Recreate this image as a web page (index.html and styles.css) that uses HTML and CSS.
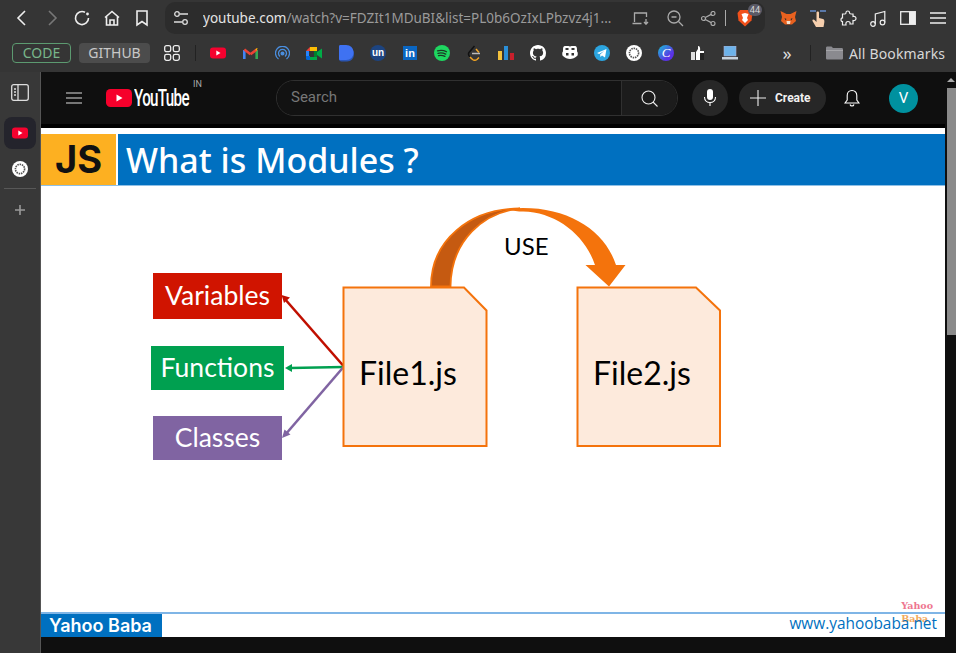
FILE: index.html
```html
<!DOCTYPE html>
<html lang="en">
<head>
    <meta charset="UTF-8">
    <meta name="viewport" content="width=device-width, initial-scale=1.0">
    <title>What is Modules - YouTube</title>
    <link rel="stylesheet" href="styles.css">
</head>
<body>
    <!-- browser toolbar -->
    <div class="toolbar">
        <span class="tool"><svg width="18" height="18" viewBox="0 0 18 18" class="line"><path d="M12 2 5 9l7 7"/></svg></span>
        <span class="tool dim"><svg width="18" height="18" viewBox="0 0 18 18" class="line"><path d="M6 2l7 7-7 7"/></svg></span>
        <span class="tool"><svg width="18" height="18" viewBox="0 0 18 18" class="line"><path d="M15.5 9A6.5 6.5 0 1 1 12 3.3"/><circle cx="14.5" cy="5" r="1.4" fill="#eee" stroke="none"/></svg></span>
        <span class="tool"><svg width="18" height="18" viewBox="0 0 18 18" class="line"><path d="M2 8.500 9 2.500l7 6M3.500 7.500V16h11V7.500M7 16v-5h4v5"/></svg></span>
        <span class="tool"><svg width="18" height="18" viewBox="0 0 18 18" class="line"><path d="M4 2h10v14l-5-3.500L4 16z"/></svg></span>

        <div class="omnibox">
            <svg class="tune" width="16" height="16" viewBox="0 0 16 16" fill="none" stroke="#ddd" stroke-width="1.300"><circle cx="4" cy="4" r="2.300"/><path d="M7 4h8M1 12h8"/><circle cx="12" cy="12" r="2.300"/></svg>
            <div class="url"><span class="host">youtube.com</span>/watch?v=FDZIt1MDuBI&amp;list=PL0b6OzIxLPbzvz4j1...</div>
            <span class="omni-btn"><svg width="18" height="13" viewBox="0 0 18 13" fill="none" stroke="#aaa" stroke-width="1.300"><path d="M2.500 10V1h12v4M.5 11.500h9"/><path d="M14 7v5M12 10l2 2.200 2-2.200"/></svg></span>
            <span class="omni-btn gap-zoom"><svg width="17" height="17" viewBox="0 0 17 17" fill="none" stroke="#aaa" stroke-width="1.300"><circle cx="7" cy="7" r="6"/><path d="M4.500 7h5M11.500 11.500 16 16"/></svg></span>
            <span class="omni-btn gap-share"><svg width="15" height="15" viewBox="0 0 15 15" fill="none" stroke="#aaa" stroke-width="1.200"><circle cx="2.500" cy="7.500" r="2"/><circle cx="12" cy="2.500" r="2"/><circle cx="12" cy="12.500" r="2"/><path d="M4.300 6.500 10.200 3.400M4.300 8.500l5.900 3.100"/></svg></span>
            <span class="omni-sep"></span>
            <span class="brave">
                <svg width="16" height="18" viewBox="0 0 16 18"><path d="M3 1h10l2.500 3-1 7.500L8 17.500 1.500 11.500.500 4z" fill="#f1511b"/><path d="M4.500 5 8 4l3.500 1L10 9l1 2-3 3-3-3 1-2z" fill="#fff"/></svg>
                <span class="badge">44</span>
            </span>
        </div>

        <div class="extensions">
            <span class="tool"><svg width="19" height="16" viewBox="0 0 18 16"><path d="M1 1l6 3h4l6-3-1.500 6 1 4-4 3.500H5.500L1.500 11l1-4z" fill="#e8611f"/><path d="M5 8l2 1-1 1.500zM13 8l-2 1 1 1.500z" fill="#2b2b2b"/><path d="M7 11h4l-.5 3h-3z" fill="#f3e2cf"/></svg></span>
            <span class="tool"><svg width="18" height="20" viewBox="0 0 18 20"><path d="M1 3h6M11 3h6" stroke="#5a78a8" stroke-width="2"/><path d="M7.500 4.500c0-1.500 2.500-1.500 2.500 0V10l4 1c1.500.5 1.500 2 1.300 3.500L14.500 19H7L3.500 13c-.5-1.500 1-2 2-1l2 2z" fill="#f6cfae"/></svg></span>
            <span class="tool"><svg width="17" height="17" viewBox="0 0 17 17" class="line thin"><path d="M6 2.500C6 .5 9.500.5 9.500 2.500c0 1 .5 1.500 1.500 1.500h2v2.500c1.800-.5 3 .5 3 2s-1.500 2.500-3 2V14h-3c.5-1.500-.5-2.500-2-2.500S5.500 12.500 6 15H2.500v-3.500C.5 12 .5 7.500 2.500 8V4H5c.8 0 1-.7 1-1.500z"/></svg></span>
            <span class="tool"><svg width="16" height="17" viewBox="0 0 16 17" class="line thin"><circle cx="3" cy="14" r="2.300"/><circle cx="12.500" cy="12.500" r="2.300"/><path d="M5.300 14V4L14.800 1.500v11"/></svg></span>
            <span class="tool"><svg width="16" height="14" viewBox="0 0 16 14"><rect x=".7" y=".7" width="14.600" height="12.600" fill="none" stroke="#eee" stroke-width="1.300"/><rect x="9" y="1" width="6" height="12" fill="#eee"/></svg></span>
            <span class="tool"><svg width="16" height="14" viewBox="0 0 16 14" class="line"><path d="M0 2h16M0 7h16M0 12h16"/></svg></span>
        </div>
    </div>

    <!-- bookmarks bar -->
    <div class="bookmarks">
        <span class="chip chip-code">CODE</span>
        <span class="chip chip-github">GITHUB</span>
        <svg class="apps" width="16" height="16" viewBox="0 0 16 16" fill="none" stroke="#eee" stroke-width="1.300"><rect x=".7" y=".7" width="6" height="6" rx="1.800"/><rect x="9.300" y=".7" width="6" height="6" rx="1.800"/><rect x=".7" y="9.300" width="6" height="6" rx="1.800"/><rect x="9.300" y="9.300" width="6" height="6" rx="1.800"/></svg>
        <span class="bar-sep first"></span>
        <div class="marks">
            <span class="mark"><svg width="16" height="12" viewBox="0 0 16 12"><rect width="16" height="11" y=".5" rx="3" fill="#f5022f"/><path d="M6.300 3.500v5l4.200-2.500z" fill="#fff"/></svg></span>
            <span class="mark"><svg width="15" height="12" viewBox="0 0 15 12" fill="none" stroke-width="2.600"><path d="M1.300 12V3" stroke="#4285f4"/><path d="M13.700 12V3" stroke="#34a853"/><path d="M1.300 2.500l6.200 4.700" stroke="#ea4335"/><path d="M7.500 7.200l6.200-4.700" stroke="#ea4335"/><path d="M13 2l1 .6" stroke="#fbbc04"/></svg></span>
            <span class="mark"><svg width="15" height="15" viewBox="0 0 15 15" fill="none" stroke="#4a8fe0" stroke-width="1.300"><path d="M3.500 13a7 7 0 1 1 8 0"/><path d="M5 10.500a4 4 0 1 1 5 0"/><circle cx="7.500" cy="7.500" r="1.400" fill="#4a8fe0"/></svg></span>
            <span class="mark"><svg width="16" height="13" viewBox="0 0 16 13"><path d="M0 4 4 0v4z" fill="#ea4335"/><path d="M4 0h7v4H4z" fill="#fbbc04"/><path d="M0 4h3v5H0z" fill="#2684fc"/><path d="M0 9h4v4H1.500A1.500 1.500 0 0 1 0 11.500z" fill="#0066da"/><path d="M4 10h7v3H4z" fill="#00ac47"/><path d="M8 4h3v6H8z" fill="#00832d"/><path d="M11 5l5-3.500v10L11 8z" fill="#00ac47"/></svg></span>
            <span class="mark"><svg width="15" height="17" viewBox="0 0 15 17"><path d="M0 1.500v12.500c0 1.500 1 2.500 2.500 2.500H8c4 0 7-3 7-7.500S12 1.500 8 1.500z" fill="#2b56b5"/><path d="M0 1.500C0 .5.500 0 1.500 0H7c4.500 0 7.500 3 7.500 7.500S11.500 15 7 15H1.500C.5 15 0 14.500 0 13.500z" fill="#3f72f2"/></svg></span>
            <span class="mark"><span class="un">un</span></span>
            <span class="mark"><span class="in">in</span></span>
            <span class="mark"><svg width="16" height="16" viewBox="0 0 16 16" fill="none"><circle cx="8" cy="8" r="8" fill="#1ed760"/><path d="M3.500 5.800c3-.8 6.200-.6 9 .9M4 8.300c2.600-.6 5.300-.4 7.700.8M4.500 10.700c2.200-.5 4.400-.3 6.400.7" stroke="#1b3a25" stroke-width="1.300" stroke-linecap="round"/></svg></span>
            <span class="mark"><svg width="14" height="17" viewBox="0 0 14 17" fill="none" stroke-width="1.500"><path d="M7.500 1 2 7.500c-1 1.500-.5 3 1 4.500" stroke="#111"/><path d="M9 4l3 3.500M3 12l2.500 2.500c1.500 1 3 1 4.500 0l2-2" stroke="#f5a623"/><path d="M5 8.500h8" stroke="#bbb"/></svg></span>
            <span class="mark"><svg width="16" height="14" viewBox="0 0 16 14"><rect y="5" width="4" height="9" fill="#f4c23d"/><rect x="6" width="4" height="14" fill="#2a8fd8"/><rect x="12" y="7" width="4" height="7" fill="#c8202c"/></svg></span>
            <span class="mark"><svg width="16" height="16" viewBox="0 0 16 16"><path fill="#fff" d="M8 0C3.580 0 0 3.580 0 8c0 3.540 2.290 6.530 5.470 7.590.4.070.55-.17.55-.38 0-.19-.01-.82-.01-1.490-2.010.37-2.530-.49-2.690-.94-.09-.23-.48-.94-.82-1.130-.28-.15-.68-.52-.01-.53.63-.01 1.080.58 1.230.82.72 1.210 1.870.87 2.330.66.070-.52.28-.87.51-1.070-1.780-.2-3.640-.89-3.640-3.950 0-.87.31-1.590.82-2.150-.08-.2-.36-1.020.08-2.120 0 0 .67-.21 2.200.82.64-.18 1.320-.27 2-.27.68 0 1.360.09 2 .27 1.530-1.040 2.200-.82 2.200-.82.44 1.100.16 1.920.08 2.120.51.56.82 1.270.82 2.150 0 3.070-1.870 3.750-3.650 3.950.29.25.54.73.54 1.480 0 1.070-.01 1.930-.01 2.200 0 .21.15.46.55.38A8.013 8.013 0 0016 8c0-4.420-3.580-8-8-8z"/></svg></span>
            <span class="mark"><svg width="16" height="14" viewBox="0 0 16 14"><path d="M3 0h3.500C8 0 8 1 8 1s0-1 1.500-1H13c1.500 0 2 1.500 2 3.500v2c1 .5 1 4 0 4.500-2 2-4.500 3-7 3s-5-1-7-3c-1-.5-1-4 0-4.500v-2C1 1.500 1.500 0 3 0z" fill="#fff"/><path d="M4 7h2.500v2.500H4zM9.500 7H12v2.500H9.500z" fill="#333"/><path d="M3.500 2h3v2h-3zM9.500 2h3v2h-3z" fill="#333"/></svg></span>
            <span class="mark"><svg width="16" height="16" viewBox="0 0 16 16"><circle cx="8" cy="8" r="8" fill="#2ca5e0"/><path d="M3 8l9.500-4-1.500 8.500-3-2-1.500 1.500-.4-2.500 4-3.500-5 3z" fill="#fff"/></svg></span>
            <span class="mark"><svg width="16" height="16" viewBox="0 0 16 16"><circle cx="8" cy="8" r="8" fill="#fff"/><circle cx="8" cy="8" r="4.600" fill="none" stroke="#555" stroke-width="1.600" stroke-dasharray="1.500 .8"/></svg></span>
            <span class="mark"><span class="canva">C</span></span>
            <span class="mark"><svg width="14" height="15" viewBox="0 0 14 15"><path d="M0 6h4v8H0z" fill="#ddd"/><path d="M5 6l2-3V0c2 0 2.500 2 2 5h4v9H5z" fill="#fff"/><path d="M9 7h4v7H9z" fill="#222"/></svg></span>
            <span class="mark"><svg width="16" height="14" viewBox="0 0 16 14"><rect x="2" y="0" width="12" height="10" fill="#6db3ea" stroke="#aac" stroke-width=".6"/><path d="M0 11h16v2.500H0z" fill="#c8d2dc"/></svg></span>
        </div>
        <span class="more">»</span>
        <span class="bar-sep second"></span>
        <svg class="folder" width="17" height="14" viewBox="0 0 17 14"><path d="M0 2c0-1 .5-1.500 1.500-1.500h4L7 2h8.500c1 0 1.500.5 1.500 1.500V12c0 1-.5 1.500-1.500 1.500h-14C.5 13.500 0 13 0 12z" fill="#8a8a8f"/><path d="M0 4h17v1H0z" fill="#a6a6aa"/></svg>
        <span class="all-marks">All Bookmarks</span>
    </div>

    <div class="window">
        <!-- sidebar -->
        <div class="sidepanel">
            <svg class="panel-toggle" width="18" height="17" viewBox="0 0 18 17" fill="none" stroke="#ddd" stroke-width="1.300"><rect x=".7" y=".7" width="16.600" height="15.600" rx="2"/><path d="M7 1v15M3 5h2M3 8h2M3 11h2"/></svg>
            <div class="side-active"><svg width="16" height="12" viewBox="0 0 16 12"><rect width="16" height="11" y=".5" rx="3" fill="#f5022f"/><path d="M6.300 3.500v5l4.200-2.500z" fill="#fff"/></svg></div>
            <svg class="side-gpt" width="16" height="16" viewBox="0 0 16 16"><circle cx="8" cy="8" r="8" fill="#fff"/><circle cx="8" cy="8" r="4.600" fill="none" stroke="#555" stroke-width="1.600" stroke-dasharray="1.500 .8"/></svg>
            <div class="side-line"></div>
            <svg class="side-plus" width="12" height="12" viewBox="0 0 12 12" stroke="#999" stroke-width="1.600"><path d="M6 1v10M1 6h10"/></svg>
        </div>

        <div class="main">
            <!-- youtube masthead -->
            <div class="masthead">
                <svg class="burger" width="16" height="12" viewBox="0 0 16 12" stroke="#ddd" stroke-width="1.100"><path d="M0 1h16M0 6h16M0 11h16"/></svg>
                <div class="yt-logo">
                    <svg width="26" height="18" viewBox="0 0 26 18"><rect width="26" height="18" rx="4.500" fill="#f6002b"/><path d="M10.500 5.500v7l6-3.500z" fill="#fff"/></svg>
                    <span class="yt-word">YouTube</span>
                    <span class="yt-in">IN</span>
                </div>
                <div class="search">
                    <div class="search-input">Search</div>
                    <div class="search-btn"><svg width="17" height="17" viewBox="0 0 17 17" fill="none" stroke="#eee" stroke-width="1.100"><circle cx="7.500" cy="7.500" r="6.500"/><path d="M12 12l4.500 4.500"/></svg></div>
                </div>
                <div class="mic"><svg width="14" height="18" viewBox="0 0 14 18"><rect x="4" y="0" width="6" height="11" rx="3" fill="#fff"/><path d="M1.500 8c0 3.500 2.500 5.500 5.500 5.500s5.500-2 5.500-5.500M7 13.500V17" fill="none" stroke="#fff" stroke-width="1.100"/></svg></div>
                <div class="create">
                    <svg width="16" height="16" viewBox="0 0 16 16" stroke="#eee" stroke-width="1.100"><path d="M8 0v16M0 8h16"/></svg>
                    <span>Create</span>
                </div>
                <svg class="bell" width="16" height="18" viewBox="0 0 16 18" fill="none" stroke="#fff" stroke-width="1.100"><path d="M8 1.500c-3 0-4.800 2.200-4.800 5V11L1 14h14l-2.200-3V6.500c0-2.800-1.800-5-4.800-5zM6 15.500c.3 1 1 1.500 2 1.500s1.700-.5 2-1.500"/></svg>
                <div class="avatar">V</div>
            </div>
            <div class="video-top"></div>

            <!-- the slide in the video -->
            <div class="slide">
                <div class="slide-head">
                    <div class="js-tag">JS</div>
                    <div class="slide-title">What is Modules ?</div>
                </div>

                <div class="diagram">
                    <svg class="wires" width="904" height="426" viewBox="41 186 904 426">
                        <path d="M343.500 366 284 298" stroke="#c00f00" stroke-width="2.600" fill="none"/>
                        <path d="M281.500 295l8.500 2.500-6 5.500z" fill="#c00f00"/>
                        <path d="M343.500 367 290 368" stroke="#00a050" stroke-width="2.600" fill="none"/>
                        <path d="M285 368l7-4v8z" fill="#00a050"/>
                        <path d="M343.500 367 285 435" stroke="#8064a2" stroke-width="2.600" fill="none"/>
                        <path d="M282 438l2.500-8.500 6 5z" fill="#8064a2"/>
                        <path d="M431 286.500C431 240 470 208.500 520 208.500 484 212 451 240 450.500 286.500z" fill="#c55a11" stroke="#f4730c" stroke-width="1.800"/>
                        <path d="M505 209.500C511 208.500 517 208 523 208 570 208 605 231 616 265h9.500L609 286.500 585.500 265H595C585 235 556 212 523 211.500 517 211.500 511 210.500 505 209.500z" fill="#f4730c"/>
                    </svg>
                    <div class="tag tag-vars">Variables</div>
                    <div class="tag tag-funcs">Functions</div>
                    <div class="tag tag-classes">Classes</div>
                    <div class="use">USE</div>
                    <div class="file file-one">
                        <svg class="file-bg" width="146" height="162" viewBox="0 0 146 162"><path d="M1.500 1.500H122L144.500 24.500V160H1.500z" fill="#fdeadc" stroke="#f4730c" stroke-width="2"/></svg>
                        <span class="file-name">File1.js</span>
                    </div>
                    <div class="file file-two">
                        <svg class="file-bg" width="146" height="162" viewBox="0 0 146 162"><path d="M1.500 1.500H120L144 24.500V160H1.500z" fill="#fdeadc" stroke="#f4730c" stroke-width="2"/></svg>
                        <span class="file-name">File2.js</span>
                    </div>
                    <div class="watermark"><span class="wm-top">Yahoo</span><span class="wm-bottom">Baba</span></div>
                </div>

                <div class="slide-foot">
                    <div class="foot-brand">Yahoo Baba</div>
                    <div class="foot-url">www.yahoobaba.net</div>
                </div>
            </div>
            <div class="video-bottom"></div>
        </div>

        <div class="scrollbar">
            <span class="scroll-up"></span>
            <span class="scroll-thumb"></span>
        </div>
    </div>
</body>
</html>
```

FILE: styles.css
```css
* {
    box-sizing: border-box;
}

html, body {
    margin: 0;
    height: 100%;
}

body {
    width: 956px;
    height: 653px;
    overflow: hidden;
    background-color: #0f0f0f;
    font-family: "Noto Sans", sans-serif;
    display: flex;
    flex-direction: column;
}

svg {
    display: block;
    flex: none;
}

.line {
    fill: none;
    stroke: #eee;
    stroke-width: 1.6;
}

.line.thin {
    stroke-width: 1.2;
}

/* toolbar */
.toolbar {
    height: 36px;
    padding-left: 7px;
    background-color: #353535;
    display: flex;
    align-items: center;
}

.tool {
    width: 30px;
    height: 30px;
    display: flex;
    align-items: center;
    justify-content: center;
}

.tool.dim svg {
    stroke: #777;
}

.omnibox {
    width: 600px;
    height: 32px;
    margin-left: 8px;
    padding-left: 8px;
    border-radius: 10px;
    background-color: #2c2c2c;
    display: flex;
    align-items: center;
}

.url {
    width: 425px;
    margin-left: 14px;
    font-size: 13.5px;
    color: #9a9a9a;
    white-space: nowrap;
    overflow: hidden;
}

.host {
    color: #e4e4e4;
}

.omni-btn {
    width: 24px;
    display: flex;
    justify-content: center;
    margin-left: 1px;
}

.gap-zoom {
    margin-left: 10px;
}

.gap-share {
    margin-left: 9px;
}

.omni-sep {
    width: 1px;
    height: 16px;
    margin-left: 5px;
    background-color: #aaa;
}

.brave {
    position: relative;
    margin-left: 11px;
}

.badge {
    position: absolute;
    left: 11px;
    top: -5px;
    width: 14px;
    height: 12px;
    border-radius: 6px;
    background-color: #5a5a66;
    color: #ddd;
    font-size: 9px;
    line-height: 12px;
    text-align: center;
}

.extensions {
    margin-left: 8px;
    display: flex;
}

/* bookmarks */
.bookmarks {
    height: 36px;
    padding-left: 12px;
    padding-bottom: 2px;
    background-color: #353535;
    display: flex;
    align-items: center;
}

.chip {
    height: 20px;
    border-radius: 4px;
    font-size: 14px;
    line-height: 20px;
    text-align: center;
}

.chip-code {
    width: 59px;
    border: 1px solid #5c9a70;
    line-height: 18px;
    color: #78b58a;
}

.chip-github {
    width: 71px;
    margin-left: 8px;
    background-color: #4c4c4c;
    color: #c8c8c8;
}

.apps {
    margin-left: 14px;
}

.bar-sep {
    width: 1px;
    height: 16px;
    background-color: #222;
}

.bar-sep.first {
    margin-left: 15px;
}

.bar-sep.second {
    margin-left: 16px;
}

.marks {
    margin-left: 6px;
    display: flex;
}

.mark {
    width: 32px;
    height: 20px;
    display: flex;
    align-items: center;
    justify-content: center;
}

.un {
    width: 16px;
    height: 16px;
    border-radius: 50%;
    background-color: #1d4480;
    color: #fff;
    font-family: "Liberation Sans", sans-serif;
    font-size: 10px;
    font-weight: bold;
    line-height: 15px;
    text-align: center;
}

.in {
    width: 14px;
    height: 14px;
    background-color: #0a66c2;
    color: #fff;
    font-family: "Liberation Sans", sans-serif;
    font-size: 11px;
    font-weight: bold;
    line-height: 15px;
    text-align: center;
}

.canva {
    width: 16px;
    height: 16px;
    border-radius: 50%;
    background: linear-gradient(135deg, #18c5d8, #5a32e6 70%);
    color: #fff;
    font-family: "Liberation Serif", serif;
    font-size: 13px;
    font-style: italic;
    line-height: 16px;
    text-align: center;
}

.more {
    width: 14px;
    margin-left: 34px;
    color: #ddd;
    font-size: 18px;
    line-height: 20px;
    text-align: center;
}

.folder {
    margin-left: 15px;
}

.all-marks {
    margin-left: 6px;
    color: #d8d8d8;
    font-size: 14px;
    letter-spacing: 0.15px;
    white-space: nowrap;
}

/* window below the browser bars */
.window {
    height: 581px;
    display: flex;
}

.sidepanel {
    width: 41px;
    border-right: 1px solid #555;
    background-color: #383838;
    display: flex;
    flex-direction: column;
    align-items: center;
}

.panel-toggle {
    margin-top: 12px;
}

.side-active {
    width: 32px;
    height: 32px;
    margin-top: 16px;
    border-radius: 8px;
    background-color: #24242c;
    display: flex;
    align-items: center;
    justify-content: center;
}

.side-gpt {
    margin-top: 12px;
}

.side-line {
    width: 32px;
    height: 1px;
    margin-top: 11px;
    background-color: #585858;
}

.side-plus {
    margin-top: 15px;
}

.main {
    width: 904px;
    display: flex;
    flex-direction: column;
}

/* youtube masthead */
.masthead {
    height: 52px;
    background-color: #0f0f0f;
    display: flex;
    align-items: center;
}

.burger {
    margin-left: 25px;
}

.yt-logo {
    width: 170px;
    margin-left: 24px;
    position: relative;
    display: flex;
    align-items: center;
}

.yt-word {
    width: 56px;
    margin-left: 2px;
    color: #fff;
    font-family: Roboto, sans-serif;
    font-size: 23px;
    font-weight: 500;
    letter-spacing: -1px;
    white-space: nowrap;
    transform: scaleX(0.66);
    transform-origin: left center;
}

.yt-in {
    position: absolute;
    left: 87px;
    top: -6px;
    color: #aaa;
    font-family: Roboto, sans-serif;
    font-size: 9px;
}

.search {
    width: 402px;
    height: 36px;
    border: 1px solid #303030;
    border-radius: 18px;
    display: flex;
}

.search-input {
    width: 344px;
    padding-left: 14px;
    color: #777;
    font-family: Roboto, sans-serif;
    font-size: 15px;
    line-height: 33px;
    background-color: #121212;
    border-radius: 18px 0 0 18px;
}

.search-btn {
    flex: 1;
    border-left: 1px solid #303030;
    border-radius: 0 18px 18px 0;
    background-color: #1c1c1c;
    display: flex;
    align-items: center;
    justify-content: center;
}

.mic {
    width: 36px;
    height: 36px;
    margin-left: 14px;
    border-radius: 50%;
    background-color: #272727;
    display: flex;
    align-items: center;
    justify-content: center;
}

.create {
    width: 87px;
    height: 32px;
    margin-left: 11px;
    padding-left: 11px;
    border-radius: 16px;
    background-color: #272727;
    color: #f1f1f1;
    font-family: Roboto, sans-serif;
    font-size: 12px;
    font-weight: 700;
    display: flex;
    align-items: center;
    gap: 9px;
}

.bell {
    margin-left: 18px;
}

.avatar {
    width: 29px;
    height: 29px;
    margin-left: 29px;
    border-radius: 50%;
    background-color: #00919f;
    color: #fff;
    font-family: Roboto, sans-serif;
    font-size: 15px;
    line-height: 29px;
    text-align: center;
}

.video-top {
    height: 4px;
    background-color: #000;
}

.video-bottom {
    flex: 1;
    background-color: #0f0f0f;
}

/* slide */
.slide {
    height: 509px;
    padding-top: 5px;
    background-color: #fff;
    display: flex;
    flex-direction: column;
}

.slide-head {
    height: 53px;
    padding-top: 1px;
    border-bottom: 1px solid #8fc0e6;
    display: flex;
    gap: 2px;
}

.js-tag {
    width: 75px;
    background-color: #fdb021;
    color: #111;
    font-family: Inter, sans-serif;
    font-size: 38px;
    font-weight: 700;
    line-height: 51px;
    text-align: center;
}

.slide-title {
    flex: 1;
    padding-left: 8px;
    background-color: #0070c0;
    color: #fff;
    font-family: "Noto Sans", sans-serif;
    font-size: 34px;
    font-weight: 500;
    line-height: 53px;
}

.diagram {
    flex: 1;
    position: relative;
}

.wires {
    position: absolute;
    left: 0;
    top: 0;
}

.tag {
    position: absolute;
    padding-bottom: 2px;
    color: #fff;
    font-family: Lato, sans-serif;
    font-size: 26.5px;
    display: flex;
    align-items: center;
    justify-content: center;
}

.tag-vars {
    left: 112px;
    top: 87px;
    width: 129px;
    height: 46px;
    background-color: #d01400;
}

.tag-funcs {
    left: 110px;
    top: 160px;
    width: 133px;
    height: 44px;
    background-color: #00a050;
}

.tag-classes {
    left: 112px;
    top: 230px;
    width: 129px;
    height: 44px;
    background-color: #8064a2;
}

.use {
    position: absolute;
    left: 463px;
    top: 45px;
    color: #000;
    font-family: Lato, sans-serif;
    font-size: 24px;
}

.file {
    position: absolute;
    top: 100px;
    width: 146px;
    height: 162px;
    padding-left: 17px;
    display: flex;
    align-items: center;
}

.file-one {
    left: 301px;
}

.file-two {
    left: 535px;
}

.file-bg {
    position: absolute;
    left: 0;
    top: 0;
}

.file-name {
    position: relative;
    top: 5px;
    color: #000;
    font-family: Lato, sans-serif;
    font-size: 32px;
}

.watermark {
    position: absolute;
    right: 12px;
    bottom: -13px;
    font-family: "DejaVu Serif", serif;
    font-size: 9.5px;
    font-weight: bold;
    line-height: 13px;
    display: flex;
    flex-direction: column;
    z-index: 1;
}

.wm-top {
    color: #ee7690;
}

.wm-bottom {
    color: #f2aa60;
}

.slide-foot {
    height: 25px;
    border-top: 2px solid #7fb5e6;
    display: flex;
    align-items: center;
    justify-content: space-between;
}

.foot-brand {
    width: 121px;
    height: 23px;
    padding-left: 8px;
    background-color: #0070c0;
    color: #fff;
    font-family: Inter, sans-serif;
    font-size: 18px;
    font-weight: 600;
    line-height: 23px;
    white-space: nowrap;
}

.foot-url {
    padding-right: 8px;
    padding-bottom: 4px;
    color: #0070c0;
    font-family: "Open Sans", sans-serif;
    font-size: 15.4px;
    position: relative;
    z-index: 2;
}

/* scrollbar */
.scrollbar {
    width: 11px;
    background-color: #0f0f0f;
    position: relative;
}

.scroll-up {
    position: absolute;
    left: 2px;
    top: 6px;
    border-left: 4px solid transparent;
    border-right: 4px solid transparent;
    border-bottom: 4px solid #aaa;
}

.scroll-thumb {
    position: absolute;
    left: 2px;
    top: 16px;
    width: 9px;
    height: 247px;
    background-color: #8a8a8a;
}
```
